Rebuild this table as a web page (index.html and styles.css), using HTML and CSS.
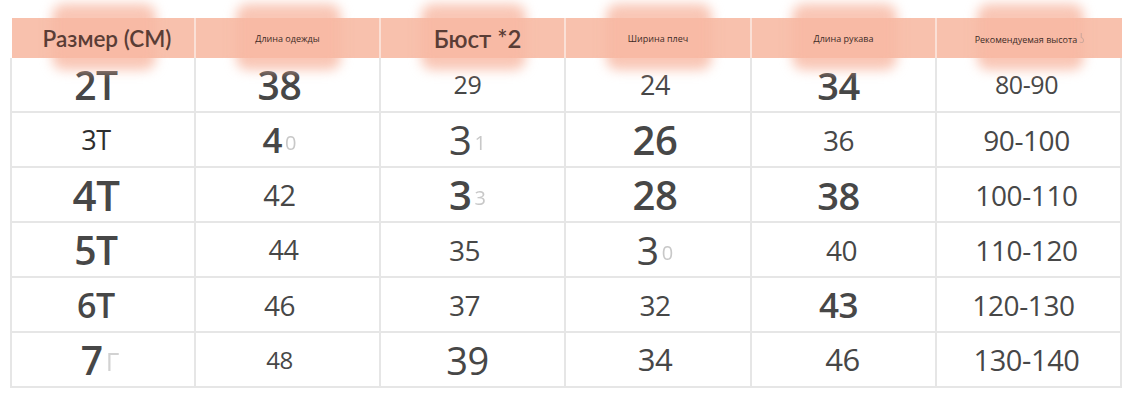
FILE: index.html
```html
<!DOCTYPE html>
<html lang="ru">
<head>
<meta charset="utf-8">
<title>Размер</title>
<link rel="stylesheet" href="styles.css">
</head>
<body>
<div class="chart">
  <div class="row head">
    <div class="hcell"><span class="hbig">Размер (СМ)</span></div>
    <div class="hcell"><span class="hsmall">Длина одежды</span></div>
    <div class="hcell"><span class="hbig hb2">Бюст *2</span></div>
    <div class="hcell"><span class="hsmall">Ширина плеч</span></div>
    <div class="hcell"><span class="hsmall">Длина рукава</span></div>
    <div class="hcell"><span class="hsmall">Рекомендуемая высота<span class="hghost">ʖ</span></span></div>
  </div>

  <div class="row body">
    <div class="cell c1"><span class="v s39 b">2T</span></div>
    <div class="cell c2"><span class="v s39 b">38</span></div>
    <div class="cell c3"><span class="v s25">29</span></div>
    <div class="cell c4"><span class="v s27">24</span></div>
    <div class="cell c5"><span class="v s38 b">34</span></div>
    <div class="cell c6"><span class="v s25">80-90</span></div>
  </div>

  <div class="row body">
    <div class="cell c1"><span class="v s27 dark">3T</span></div>
    <div class="cell c2"><span class="v s35 b">4</span><span class="ghost">0</span></div>
    <div class="cell c3"><span class="v s40">3</span><span class="ghost">1</span></div>
    <div class="cell c4"><span class="v s40 b">26</span></div>
    <div class="cell c5"><span class="v s28">36</span></div>
    <div class="cell c6"><span class="v s28">90-100</span></div>
  </div>

  <div class="row body">
    <div class="cell c1"><span class="v s42 b">4T</span></div>
    <div class="cell c2"><span class="v s29">42</span></div>
    <div class="cell c3"><span class="v s40 b">3</span><span class="ghost">3</span></div>
    <div class="cell c4"><span class="v s40 b">28</span></div>
    <div class="cell c5"><span class="v s38 b">38</span></div>
    <div class="cell c6"><span class="v s28">100-110</span></div>
  </div>

  <div class="row body">
    <div class="cell c1"><span class="v s39 b">5T</span></div>
    <div class="cell c2 o44"><span class="v s27">44</span></div>
    <div class="cell c3 o35"><span class="v s28">35</span></div>
    <div class="cell c4"><span class="v s39">3</span><span class="ghost">0</span></div>
    <div class="cell c5 o40"><span class="v s28">40</span></div>
    <div class="cell c6"><span class="v s28">110-120</span></div>
  </div>

  <div class="row body">
    <div class="cell c1"><span class="v s34 b">6T</span></div>
    <div class="cell c2"><span class="v s28">46</span></div>
    <div class="cell c3 o35"><span class="v s28">37</span></div>
    <div class="cell c4"><span class="v s28">32</span></div>
    <div class="cell c5"><span class="v s35 b">43</span></div>
    <div class="cell c6 o120"><span class="v s28">120-130</span></div>
  </div>

  <div class="row body">
    <div class="cell c1 o7"><span class="v s39 b">7</span><span class="ghost g7">Г</span></div>
    <div class="cell c2"><span class="v s24">48</span></div>
    <div class="cell c3"><span class="v s38">39</span></div>
    <div class="cell c4"><span class="v s31">34</span></div>
    <div class="cell c5 o46"><span class="v s31">46</span></div>
    <div class="cell c6"><span class="v s29">130-140</span></div>
  </div>
</div>
</body>
</html>
```

FILE: styles.css
```css
html, body {
  margin: 0;
  padding: 0;
  background: #ffffff;
}

body {
  width: 1134px;
  height: 408px;
  overflow: hidden;
}

.chart {
  width: 1110px;
  margin: 18px 0 0 12px;
  font-family: "Open Sans", "Noto Sans", sans-serif;
  color: #474747;
}

.row {
  display: grid;
  grid-template-columns: 184px 185px 185px 186px 185px 185px;
}

.head {
  height: 40px;
  background: #f8c1ad;
}

.hcell {
  position: relative;
  display: flex;
  align-items: center;
  justify-content: center;
  border-right: 2px solid #fbe0d6;
}

.hcell:last-child {
  border-right: none;
}

.hcell::before {
  content: "";
  position: absolute;
  top: -14px;
  bottom: -12px;
  left: 40px;
  right: 38px;
  background: rgba(247, 184, 162, 0.8);
  border-radius: 12px;
  filter: blur(6px);
  z-index: 0;
}

.hcell > span {
  position: relative;
  z-index: 1;
}

.hbig {
  font-family: "Lato", "Open Sans", sans-serif;
  font-weight: 600;
  font-size: 22.5px;
  color: #5a3d36;
  margin-left: 8px;
}

.hb2 {
  font-size: 24px;
  margin-left: 10px;
}

.hsmall {
  font-size: 9px;
  color: #3d2b26;
  margin-top: 1px;
}

.hghost {
  color: #b39a93;
  font-size: 12px;
  margin-left: 2px;
  opacity: 0.6;
}

.body {
  height: 55px;
  border-left: 2px solid #e6e6e6;
  border-bottom: 2px solid #e6e6e6;
  margin-left: -2px;
  box-sizing: border-box;
}

.cell {
  display: flex;
  align-items: center;
  justify-content: center;
  border-right: 2px solid #e6e6e6;
}

.v {
  line-height: 1;
  font-weight: 500;
  letter-spacing: -0.4px;
}

.b { font-weight: 600; }
.dark { color: #2e2e2e; font-weight: 400; }

.s24 { font-size: 24px; }
.s25 { font-size: 25px; }
.s27 { font-size: 27px; }
.s28 { font-size: 28px; }
.s29 { font-size: 29px; }
.s31 { font-size: 31px; }
.s34 { font-size: 34px; }
.s35 { font-size: 35px; }
.s38 { font-size: 38px; }
.s39 { font-size: 39px; }
.s40 { font-size: 40px; }
.s42 { font-size: 42px; }

.ghost {
  font-size: 20px;
  line-height: 1;
  color: #c8c8c8;
  margin-left: 3px;
  margin-top: 6px;
  filter: blur(0.4px);
}

.g7 {
  font-size: 26px;
  color: #d2d2d2;
  margin-left: 3px;
  margin-top: 2px;
}

.c1 { padding-right: 14px; }
.c2 { padding-right: 16px; }
.c3 { padding-right: 10px; }
.c4 { padding-right: 6px; }
.c5 { padding-right: 10px; }
.c6 { padding-right: 4px; }

.c2.o44 { padding-right: 8px; }
.c3.o35 { padding-right: 16px; }
.c5.o40 { padding-right: 4px; }
.c5.o46 { padding-right: 2px; }
.c6.o120 { padding-right: 10px; }
.c1.o7 { padding-right: 6px; }
```
